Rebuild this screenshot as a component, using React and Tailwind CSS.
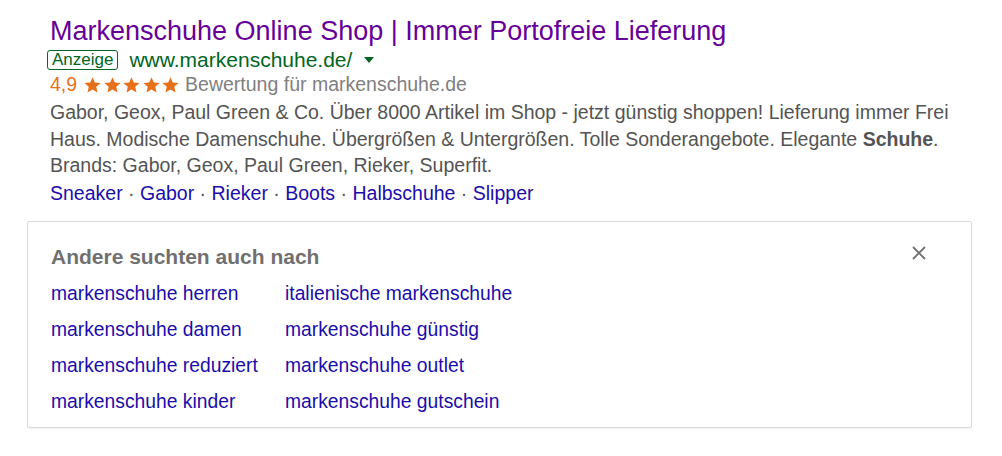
const links = ["Sneaker", "Gabor", "Rieker", "Boots", "Halbschuhe", "Slipper"];
const related = [
  ["markenschuhe herren", "italienische markenschuhe"],
  ["markenschuhe damen", "markenschuhe günstig"],
  ["markenschuhe reduziert", "markenschuhe outlet"],
  ["markenschuhe kinder", "markenschuhe gutschein"],
];

const Star = () => (
  <svg width="19" height="18" viewBox="0 0 24 24" className="fill-[#e7711b] mr-[0.6px]">
    <path d="M12 1.5l3.1 7.1 7.7.7-5.8 5.1 1.7 7.6L12 18l-6.7 4 1.7-7.6-5.8-5.1 7.7-.7z" />
  </svg>
);

export default function App() {
  return (
    <div className="w-[1002px] h-[456px] bg-white font-['Liberation_Sans',Arial,sans-serif] pt-[13px]">
      <div className="pl-[50px]">
        <a className="block text-[27px] leading-[36px] text-[#660099]">
          Markenschuhe Online Shop | Immer Portofreie Lieferung
        </a>
        <div className="flex items-center h-[22px] text-[21px] text-[#006621]">
          <span className="border border-[#006621] rounded-[3px] text-[17px] leading-[16px] px-[4px] py-[1px] ml-[-3px] mr-[11px]">
            Anzeige
          </span>
          <span>www.markenschuhe.de/</span>
          <svg width="12" height="10" viewBox="0 0 12 10" className="ml-[11px] fill-[#006621]">
            <path d="M1 2h10L6 8z" />
          </svg>
        </div>
        <div className="flex items-center h-[26px] text-[19.5px] mt-[1px]">
          <span className="text-[#e7711b] mr-[6px]">4,9</span>
          <div className="flex">
            <Star />
            <Star />
            <Star />
            <Star />
            <Star />
          </div>
          <span className="text-[#808080] ml-[4px]">Bewertung für markenschuhe.de</span>
        </div>
        <p className="text-[19.5px] leading-[26.5px] text-[#545454] whitespace-nowrap mt-[1px]">
          Gabor, Geox, Paul Green &amp; Co. Über 8000 Artikel im Shop - jetzt günstig shoppen! Lieferung immer Frei
          <br />
          Haus. Modische Damenschuhe. Übergrößen &amp; Untergrößen. Tolle Sonderangebote. Elegante{" "}
          <b>Schuhe</b>.
          <br />
          Brands: Gabor, Geox, Paul Green, Rieker, Superfit.
        </p>
        <div className="text-[19.5px] leading-[26px] text-[#1a0dab] mt-[1px]">
          {links.map((l, i) => (
            <span key={l}>
              {i > 0 && <span className="text-[#545454]"> · </span>}
              <a>{l}</a>
            </span>
          ))}
        </div>
      </div>

      <div className="ml-[27px] mt-[15px] w-[945px] h-[207px] border border-[#dadada] rounded-[2px] shadow-[0_1px_1px_rgba(0,0,0,0.05)] relative pl-[23px] pt-[21px]">
        <div className="text-[21px] font-bold text-[#707070] leading-[28px]">Andere suchten auch nach</div>
        <div className="grid grid-cols-[234px_auto] mt-[5px]">
          {related.map((r) => (
            <div key={r[0]} className="contents">
              <a className="text-[19.3px] leading-[36px] text-[#1a0dab]">{r[0]}</a>
              <a className="text-[19.3px] leading-[36px] text-[#1a0dab]">{r[1]}</a>
            </div>
          ))}
        </div>
        <svg width="16" height="16" viewBox="0 0 16 16" className="absolute right-[44px] top-[23px] stroke-[#707070]" strokeWidth="1.8">
          <path d="M2 2l12 12M14 2L2 14" />
        </svg>
      </div>
    </div>
  );
}
